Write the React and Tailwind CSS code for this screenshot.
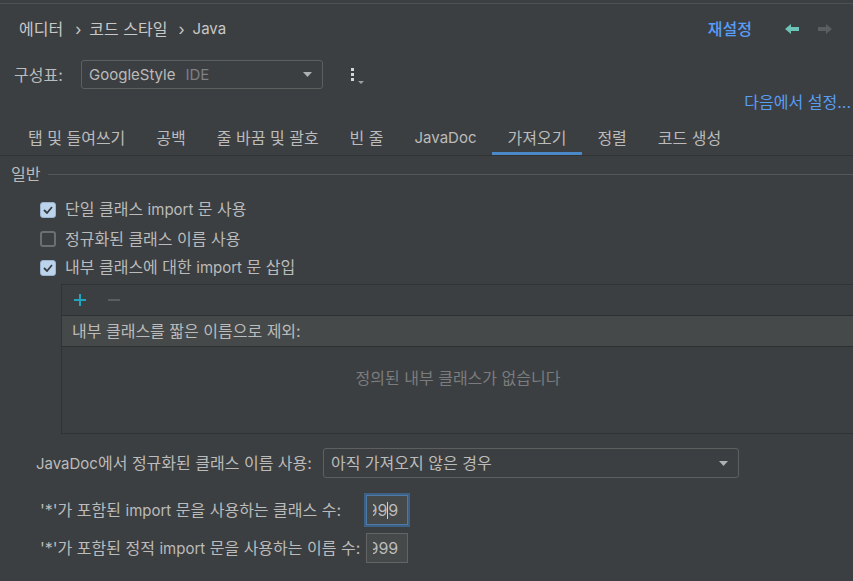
import React from 'react';

const tabs = ['탭 및 들여쓰기', '공백', '줄 바꿈 및 괄호', '빈 줄', 'JavaDoc', '가져오기', '정렬', '코드 생성'];

const L = ({ children }) => <span className="text-[15px]">{children}</span>;

const DropArrow = () => (
  <svg width="9" height="5" viewBox="0 0 9 5" className="shrink-0">
    <path d="M0 0h9L4.5 5z" fill="#aeb0b2" />
  </svg>
);

const Arrow = ({ dir, color }) => (
  <svg width="14" height="10" viewBox="0 0 14 10" className={dir === 'right' ? 'rotate-180' : ''}>
    <path d="M0 5L6 0v3h8v4H6v3z" fill={color} />
  </svg>
);

const Checkbox = ({ checked, children }) => (
  <div className="h-[29px] flex items-center gap-[9px]">
    {checked ? (
      <div className="w-4 h-4 rounded-[3px] bg-[#bcd3ec] border border-[#9bb3cd] flex items-center justify-center">
        <svg width="10" height="8" viewBox="0 0 10 8">
          <path d="M1 4l3 3 5-6" fill="none" stroke="#3a3d40" strokeWidth="1.8" />
        </svg>
      </div>
    ) : (
      <div className="w-4 h-4 rounded-[3px] border-2 border-[#6c6e70] bg-[#3c3f41]" />
    )}
    <span>{children}</span>
  </div>
);

const NumberField = ({ focused }) => (
  <div
    className={`w-[42px] h-[30px] bg-[#45494a] flex items-center pl-[6px] pr-[9px] ${
      focused ? 'border border-[#4f7aa6] ring-2 ring-[#3d6185]' : 'border border-[#646464]'
    }`}
  >
    <div className="flex-1 flex justify-end overflow-hidden">
      {focused ? (
        <span className="shrink-0 whitespace-nowrap flex items-center">
          99<span className="inline-block w-px h-[17px] bg-[#cfcfcf]" />9
        </span>
      ) : (
        <span className="shrink-0 whitespace-nowrap">999</span>
      )}
    </div>
  </div>
);

export default function App() {
  return (
    <div className="w-[853px] h-[581px] overflow-hidden bg-[#3c3f41] text-[#bbbbbb] text-[16px] leading-[20px] font-[Inter,'Noto_Sans_CJK_KR',sans-serif]">
      <div className="mt-[3px] border-t border-[#515151]" />

      {/* breadcrumb */}
      <div className="h-[50px] flex items-center pl-[19px] pr-[21px] text-[#c8c8c8]">
        <span>에디터</span>
        <span className="ml-[12px]">›</span>
        <span className="ml-[8px]">코드 스타일</span>
        <span className="ml-[11px]">›</span>
        <span className="ml-[8px] text-[15px]">Java</span>
        <span className="ml-auto text-[#589df6] font-medium">재설정</span>
        <div className="ml-[33px] flex items-center gap-[19px]">
          <Arrow dir="left" color="#6cc3b6" />
          <Arrow dir="right" color="#5b5e60" />
        </div>
      </div>

      {/* scheme */}
      <div className="mt-[6px] h-[29px] flex items-center pl-[14px]">
        <span className="w-[67px]">구성표:</span>
        <div className="w-[242px] h-[29px] border border-[#5e6060] rounded-[3px] flex items-center pl-[7px] pr-[10px] text-[15px]">
          <span>GoogleStyle</span>
          <span className="ml-[10px] text-[#7e8082]">IDE</span>
          <span className="ml-auto"><DropArrow /></span>
        </div>
        <div className="ml-[28px] w-[14px] h-[20px]">
          <svg width="14" height="18" viewBox="0 0 14 18" className="mt-[1px]">
            <rect x="0" y="2" width="3" height="3" fill="#d6d6d6" />
            <rect x="0" y="7" width="3" height="3" fill="#d6d6d6" />
            <rect x="0" y="12" width="3" height="3" fill="#d6d6d6" />
            <path d="M7 15h6l-3 3z" fill="#9aa0a6" />
          </svg>
        </div>
      </div>

      <div className="h-[26px] flex items-center justify-end pr-[2px] text-[#589df6]">다음에서 설정...</div>

      {/* tabs */}
      <div className="h-[41px] flex pl-[12.5px] border-b border-[#323232]">
        {tabs.map((t) => (
          <div
            key={t}
            className={`h-full px-[15.5px] pt-[8px] flex items-center border-b-[3px] ${
              t === 'JavaDoc' ? 'text-[15px]' : ''
            } ${t === '가져오기' ? 'border-[#4a88c7]' : 'border-transparent'}`}
          >
            {t}
          </div>
        ))}
      </div>

      {/* general */}
      <div className="h-[36px] flex items-center pl-[11px]">
        <span>일반</span>
        <div className="flex-1 h-px bg-[#545658] ml-[8px]" />
      </div>

      <div className="mt-[3px] pl-[40px] flex flex-col">
        <Checkbox checked>단일 클래스 <L>import</L> 문 사용</Checkbox>
        <Checkbox>정규화된 클래스 이름 사용</Checkbox>
        <Checkbox checked>내부 클래스에 대한 <L>import</L> 문 삽입</Checkbox>
      </div>

      {/* inner classes table */}
      <div className="mt-[2px] ml-[61px] w-[794px] border border-[#323232]">
        <div className="h-[30px] flex items-center pl-[12px] gap-[22px]">
          <svg width="12" height="12" viewBox="0 0 12 12">
            <path d="M6 0v12M0 6h12" stroke="#21a4bd" strokeWidth="2" />
          </svg>
          <svg width="12" height="12" viewBox="0 0 12 12">
            <path d="M0 6h12" stroke="#5b5e60" strokeWidth="2" />
          </svg>
        </div>
        <div className="h-[32px] border-t border-b border-[#2f2f2f] bg-[#45494a] flex items-center pl-[10px]">
          내부 클래스를 짧은 이름으로 제외:
        </div>
        <div className="h-[86px] pt-[21px] text-center text-[#7a7c7e]">정의된 내부 클래스가 없습니다</div>
      </div>

      {/* javadoc */}
      <div className="mt-[14px] h-[30px] flex items-center pl-[36px]">
        <span><L>JavaDoc</L>에서 정규화된 클래스 이름 사용:</span>
        <div className="ml-[11px] w-[416px] h-[30px] border border-[#5e6060] rounded-[3px] flex items-center pl-[7px] pr-[10px]">
          <span>아직 가져오지 않은 경우</span>
          <span className="ml-auto"><DropArrow /></span>
        </div>
      </div>

      <div className="mt-[17px] pl-[40px] grid grid-cols-[auto_auto] gap-x-[6px] gap-y-[8px] w-fit items-center">
        <span>'*'가 포함된 <L>import</L> 문을 사용하는 클래스 수:</span>
        <NumberField focused />
        <span>'*'가 포함된 정적 <L>import</L> 문을 사용하는 이름 수:</span>
        <NumberField />
      </div>
    </div>
  );
}
